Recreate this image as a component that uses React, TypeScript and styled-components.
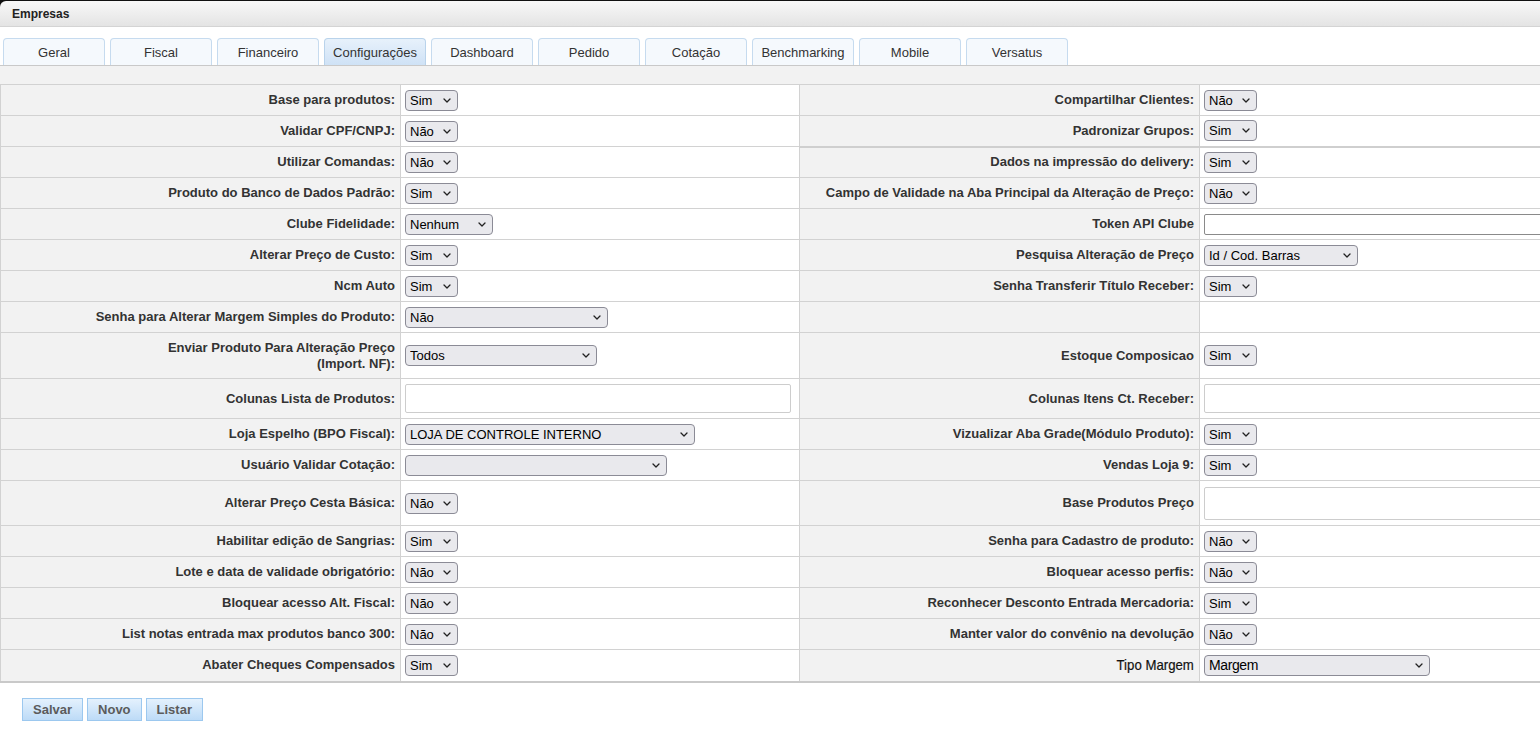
import React from "react";
import styled, { createGlobalStyle, css } from "styled-components";

const GlobalStyle = createGlobalStyle`
  html, body { margin: 0; padding: 0; background: #fff; overflow: hidden; }
  body { font-family: "Liberation Sans", Arial, sans-serif; font-size: 13px; color: #333; }
`;

const Page = styled.div`
  width: 100%;
  min-height: 100vh;
`;

const TitleFrame = styled.div`
  background: #111;
  padding-top: 1px;
`;

const TitleBar = styled.div`
  height: 25px;
  display: flex;
  align-items: center;
  padding-left: 12px;
  border-top-left-radius: 6px;
  border-bottom: 1px solid #d4d4d4;
  background: linear-gradient(#f8f8f8, #e4e4e4);
  font-weight: bold;
  font-size: 12px;
  color: #222;
`;

const TabBar = styled.div`
  display: flex;
  gap: 5px;
  padding: 11px 0 0 3px;
`;

const Tab = styled.div<{ $active?: boolean }>`
  width: 102px;
  height: 27px;
  box-sizing: border-box;
  display: flex;
  align-items: center;
  justify-content: center;
  border: 1px solid #c6dbef;
  border-bottom: none;
  border-radius: 4px 4px 0 0;
  font-size: 13px;
  color: #333;
  background: #f5f9fd;
  ${({ $active }) =>
    $active &&
    css`
      background: linear-gradient(#e7f1fb, #cfe2f6);
      border-color: #b9d3eb;
    `}
`;

const Strip = styled.div`
  height: 18px;
  background: #f2f2f2;
  border-top: 1px solid #c9c9c9;
`;

const Grid = styled.table`
  border-collapse: collapse;
  table-layout: fixed;
  width: 1600px;
  border-top: 1px solid #cfcfcf;
  border-bottom: 2px solid #c9c9c9;
`;

const Line = styled.tr<{ $h: number }>`
  height: ${({ $h }) => $h}px;
`;

const LabelCell = styled.td<{ $thick?: boolean }>`
  background: #f2f2f2;
  border: 1px solid #d2d2d2;
  padding: 0 5px;
  text-align: right;
  font-weight: bold;
  font-size: 13px;
  line-height: 16px;
  color: #333;
  ${({ $thick }) => $thick && css`border-top: 2px solid #cfcfcf;`}
`;

const NarrowText = styled.span`
  display: inline-block;
  font-size: 15px;
  font-weight: normal;
  color: #111;
  -webkit-text-stroke: 0.2px #111;
  transform: scaleX(0.88);
  transform-origin: right center;
`;

const FieldCell = styled.td<{ $thick?: boolean }>`
  background: #fff;
  border: 1px solid #d2d2d2;
  padding: 0 4px;
  ${({ $thick }) => $thick && css`border-top: 2px solid #cfcfcf;`}
`;

const SelectBox = styled.span`
  position: relative;
  display: inline-block;
  vertical-align: middle;
  line-height: 0;
`;

const Select = styled.select<{ $w: number; $narrow?: boolean }>`
  appearance: none;
  -webkit-appearance: none;
  width: ${({ $w }) => $w}px;
  height: 21px;
  box-sizing: border-box;
  margin: 0;
  padding: 0 18px 0 4px;
  border: 1px solid #8b8b96;
  border-radius: 4px;
  background: #e9e9ed;
  font-family: "Liberation Sans", Arial, sans-serif;
  font-size: 13px;
  color: #000;
  outline: none;
  ${({ $narrow }) =>
    $narrow &&
    css`
      font-size: 14px;
      letter-spacing: -0.4px;
    `}
`;

const Caret = styled.svg`
  position: absolute;
  right: 7px;
  top: 8px;
  width: 8px;
  height: 5px;
  pointer-events: none;
`;

const TextBox = styled.input<{ $h: number; $soft?: boolean }>`
  width: 386px;
  height: ${({ $h }) => $h}px;
  box-sizing: border-box;
  margin: 0;
  padding: 0 4px;
  font-family: "Liberation Sans", Arial, sans-serif;
  font-size: 13px;
  vertical-align: middle;
  border-radius: 2px;
  border: 1px solid ${({ $soft }) => ($soft ? "#cdcdcd" : "#8a8a8a")};
  outline: none;
`;

const Actions = styled.div`
  display: flex;
  gap: 4px;
  padding: 15px 0 0 22px;
`;

const ActionButton = styled.button`
  height: 23px;
  padding: 0 10px;
  border: 1px solid #9cc8ef;
  background: linear-gradient(#e4f1fd, #bddbf7);
  font-family: "Liberation Sans", Arial, sans-serif;
  font-weight: bold;
  font-size: 13px;
  color: #5b5b5b;
  cursor: pointer;
`;

type Field =
  | { kind: "select"; value: string; w?: number; narrow?: boolean }
  | { kind: "input"; h: number; soft?: boolean }
  | { kind: "none" };

type Side = { label: React.ReactNode; field: Field };

type FormRow = { h: number; left: Side; right: Side; thickRight?: boolean };

const yes: Field = { kind: "select", value: "Sim" };
const no: Field = { kind: "select", value: "Não" };

const rows: FormRow[] = [
  { h: 31, left: { label: "Base para produtos:", field: yes }, right: { label: "Compartilhar Clientes:", field: no } },
  { h: 31, left: { label: "Validar CPF/CNPJ:", field: no }, right: { label: "Padronizar Grupos:", field: yes } },
  { h: 31, left: { label: "Utilizar Comandas:", field: no }, right: { label: "Dados na impressão do delivery:", field: yes }, thickRight: true },
  { h: 31, left: { label: "Produto do Banco de Dados Padrão:", field: yes }, right: { label: "Campo de Validade na Aba Principal da Alteração de Preço:", field: no } },
  { h: 31, left: { label: "Clube Fidelidade:", field: { kind: "select", value: "Nenhum", w: 88 } }, right: { label: "Token API Clube", field: { kind: "input", h: 21 } } },
  { h: 31, left: { label: "Alterar Preço de Custo:", field: yes }, right: { label: "Pesquisa Alteração de Preço", field: { kind: "select", value: "Id / Cod. Barras", w: 154 } } },
  { h: 31, left: { label: "Ncm Auto", field: yes }, right: { label: "Senha Transferir Título Receber:", field: yes } },
  { h: 31, left: { label: "Senha para Alterar Margem Simples do Produto:", field: { kind: "select", value: "Não", w: 203 } }, right: { label: "", field: { kind: "none" } } },
  {
    h: 46,
    left: { label: <>Enviar Produto Para Alteração Preço<br />(Import. NF):</>, field: { kind: "select", value: "Todos", w: 192 } },
    right: { label: "Estoque Composicao", field: yes },
  },
  { h: 40, left: { label: "Colunas Lista de Produtos:", field: { kind: "input", h: 29, soft: true } }, right: { label: "Colunas Itens Ct. Receber:", field: { kind: "input", h: 29, soft: true } } },
  { h: 31, left: { label: "Loja Espelho (BPO Fiscal):", field: { kind: "select", value: "LOJA DE CONTROLE INTERNO", w: 290 } }, right: { label: "Vizualizar Aba Grade(Módulo Produto):", field: yes } },
  { h: 31, left: { label: "Usuário Validar Cotação:", field: { kind: "select", value: "", w: 262 } }, right: { label: "Vendas Loja 9:", field: yes } },
  { h: 45, left: { label: "Alterar Preço Cesta Básica:", field: no }, right: { label: "Base Produtos Preço", field: { kind: "input", h: 33, soft: true } } },
  { h: 31, left: { label: "Habilitar edição de Sangrias:", field: yes }, right: { label: "Senha para Cadastro de produto:", field: no } },
  { h: 31, left: { label: "Lote e data de validade obrigatório:", field: no }, right: { label: "Bloquear acesso perfis:", field: no } },
  { h: 31, left: { label: "Bloquear acesso Alt. Fiscal:", field: no }, right: { label: "Reconhecer Desconto Entrada Mercadoria:", field: yes } },
  { h: 31, left: { label: "List notas entrada max produtos banco 300:", field: no }, right: { label: "Manter valor do convênio na devolução", field: no } },
  {
    h: 32,
    left: { label: "Abater Cheques Compensados", field: yes },
    right: { label: <NarrowText>Tipo Margem</NarrowText>, field: { kind: "select", value: "Margem", w: 226, narrow: true } },
  },
];

const tabs = ["Geral", "Fiscal", "Financeiro", "Configurações", "Dashboard", "Pedido", "Cotação", "Benchmarking", "Mobile", "Versatus"];

function FieldControl({ field }: { field: Field }) {
  if (field.kind === "select") {
    return (
      <SelectBox>
        <Select $w={field.w ?? 53} $narrow={field.narrow} defaultValue={field.value}>
          <option value={field.value}>{field.value}</option>
        </Select>
        <Caret viewBox="0 0 8 5" aria-hidden>
          <path d="M1 1l3 3 3-3" fill="none" stroke="#222" strokeWidth="1.3" strokeLinecap="round" strokeLinejoin="round" />
        </Caret>
      </SelectBox>
    );
  }
  if (field.kind === "input") {
    return <TextBox type="text" $h={field.h} $soft={field.soft} />;
  }
  return null;
}

export default function App() {
  return (
    <Page>
      <GlobalStyle />
      <TitleFrame>
        <TitleBar>Empresas</TitleBar>
      </TitleFrame>
      <TabBar>
        {tabs.map((t) => (
          <Tab key={t} $active={t === "Configurações"}>
            {t}
          </Tab>
        ))}
      </TabBar>
      <Strip />
      <Grid>
        <colgroup>
          <col style={{ width: 400 }} />
          <col style={{ width: 399 }} />
          <col style={{ width: 400 }} />
          <col style={{ width: 401 }} />
        </colgroup>
        <tbody>
          {rows.map((r, i) => (
            <Line key={i} $h={r.h}>
              <LabelCell>{r.left.label}</LabelCell>
              <FieldCell>
                <FieldControl field={r.left.field} />
              </FieldCell>
              <LabelCell $thick={r.thickRight}>{r.right.label}</LabelCell>
              <FieldCell $thick={r.thickRight}>
                <FieldControl field={r.right.field} />
              </FieldCell>
            </Line>
          ))}
        </tbody>
      </Grid>
      <Actions>
        <ActionButton>Salvar</ActionButton>
        <ActionButton>Novo</ActionButton>
        <ActionButton>Listar</ActionButton>
      </Actions>
    </Page>
  );
}
